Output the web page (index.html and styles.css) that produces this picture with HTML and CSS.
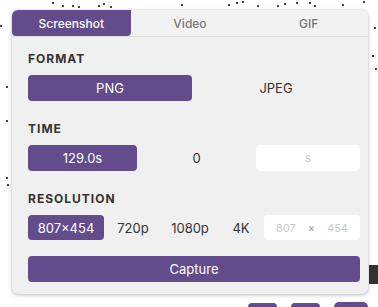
FILE: index.html
```html
<!DOCTYPE html>
<html lang="en">
<head>
    <meta charset="UTF-8">
    <meta name="viewport" content="width=device-width, initial-scale=1.0">
    <title>Capture</title>
<link rel="stylesheet" href="styles.css">
</head>

<body>
    <div class="backdrop">
        <span class="dot" style="left:52px;top:2px"></span>
        <span class="dot" style="left:62px;top:5px"></span>
        <span class="dot" style="left:72px;top:5px"></span>
        <span class="dot" style="left:78px;top:6px"></span>
        <span class="dot" style="left:98px;top:5px"></span>
        <span class="dot" style="left:103px;top:3px"></span>
        <span class="dot" style="left:110px;top:6px"></span>
        <span class="dot" style="left:181px;top:4px"></span>
        <span class="dot" style="left:228px;top:4px"></span>
        <span class="dot" style="left:236px;top:2px"></span>
        <span class="dot" style="left:242px;top:1px"></span>
        <span class="dot" style="left:257px;top:5px"></span>
        <span class="dot" style="left:277px;top:5px"></span>
        <span class="dot" style="left:284px;top:3px"></span>
        <span class="dot" style="left:296px;top:2px"></span>
        <span class="dot" style="left:309px;top:2px"></span>
        <span class="dot" style="left:314px;top:5px"></span>
        <span class="dot" style="left:342px;top:4px"></span>
        <span class="dot" style="left:363px;top:1px"></span>
        <span class="dot" style="left:374px;top:27px"></span>
        <span class="dot" style="left:372px;top:55px"></span>
        <span class="dot" style="left:375px;top:68px"></span>
        <span class="dot" style="left:0px;top:25px"></span>
        <span class="dot" style="left:6px;top:86px"></span>
        <span class="dot" style="left:6px;top:120px"></span>
        <span class="dot" style="left:6px;top:177px"></span>
        <span class="dot" style="left:7px;top:184px"></span>
        <div class="dark-box"></div>
        <div class="peek peek-1"></div>
        <div class="peek peek-2"></div>
        <div class="peek peek-3"></div>
    </div>

    <div class="popover">
        <div class="tabs">
            <div class="tab active">Screenshot</div>
            <div class="tab">Video</div>
            <div class="tab">GIF</div>
        </div>

        <div class="body">
            <div class="section-title">FORMAT</div>
            <div class="row format-row">
                <button class="opt selected">PNG</button>
                <button class="opt">JPEG</button>
            </div>

            <div class="section-title">TIME</div>
            <div class="row time-row">
                <button class="opt selected">129.0s</button>
                <button class="opt">0</button>
                <div class="field"><span class="ph">s</span></div>
            </div>

            <div class="section-title">RESOLUTION</div>
            <div class="row res-row">
                <button class="opt selected">807×454</button>
                <button class="opt">720p</button>
                <button class="opt">1080p</button>
                <button class="opt">4K</button>
                <div class="field size-field">
                    <span class="ph">807</span>
                    <span class="times">×</span>
                    <span class="ph">454</span>
                </div>
            </div>

            <button class="capture">Capture</button>
        </div>
    </div>
</body>
</html>
```

FILE: styles.css
```css
html {
    overflow: hidden;
}
body {
    margin: 0;
    background: #fff;
    font-family: Inter, "Noto Sans", sans-serif;
    width: 378px;
    height: 307px;
    overflow: hidden;
    position: relative;
}
.backdrop .dot {
    position: absolute;
    width: 2px;
    height: 2px;
    background: #444;
}
.dark-box {
    position: absolute;
    left: 369px;
    top: 265px;
    width: 12px;
    height: 19px;
    background: #333;
}
.peek {
    position: absolute;
    background: #634c8b;
    border-radius: 6px 6px 0 0;
    height: 4px;
}
.peek-1 { left: 248px; top: 303px; width: 29px; }
.peek-2 { left: 291px; top: 303px; width: 29px; }
.peek-3 { left: 334px; top: 302px; width: 34px; height: 5px; }

.popover {
    position: relative;
    margin: 10px 0 0 12px;
    width: 356px;
    background: #f0f0f0;
    border-radius: 6px;
    box-shadow: 0 1px 4px rgba(0, 0, 0, 0.25), 0 0 1px rgba(0, 0, 0, 0.2);
    overflow: hidden;
}
.tabs {
    display: grid;
    grid-template-columns: 1fr 1fr 1fr;
    height: 26px;
    border-bottom: 1px solid #dcdcdc;
    background: #f2f2f2;
}
.tab {
    display: flex;
    align-items: center;
    justify-content: center;
    font-size: 12px;
    font-weight: 500;
    color: #777;
}
.tab.active {
    background: #634c8b;
    color: #fff;
    border-radius: 0 0 4px 4px;
}
.body {
    padding: 14px 8px 12px 16px;
}
.section-title {
    font-size: 12px;
    font-weight: 700;
    letter-spacing: 1px;
    color: #333;
    height: 16px;
    line-height: 16px;
    margin-bottom: 8px;
}
.row {
    display: grid;
    height: 26px;
    margin-bottom: 20px;
}
.format-row {
    grid-template-columns: 164px 1fr;
}
.time-row {
    grid-template-columns: 109px 1fr 104px;
}
.res-row {
    grid-template-columns: 76px 58px 56px 46px 1fr;
    height: 25px;
    margin-bottom: 16px;
}
.opt {
    border: none;
    background: transparent;
    font-family: inherit;
    font-size: 13px;
    color: #333;
    padding: 0;
    border-radius: 4px;
}
.opt.selected {
    background: #634c8b;
    color: #fff;
}
.field {
    background: #fff;
    border-radius: 4px;
    display: flex;
    align-items: center;
    justify-content: center;
    font-size: 11px;
}
.size-field {
    justify-content: space-around;
    padding: 0 6px;
}
.ph {
    color: #c8c8c8;
}
.times {
    color: #999;
}
.capture {
    display: block;
    width: 100%;
    height: 26px;
    border: none;
    border-radius: 4px;
    background: #634c8b;
    color: #fff;
    font-family: inherit;
    font-size: 13px;
}
```
